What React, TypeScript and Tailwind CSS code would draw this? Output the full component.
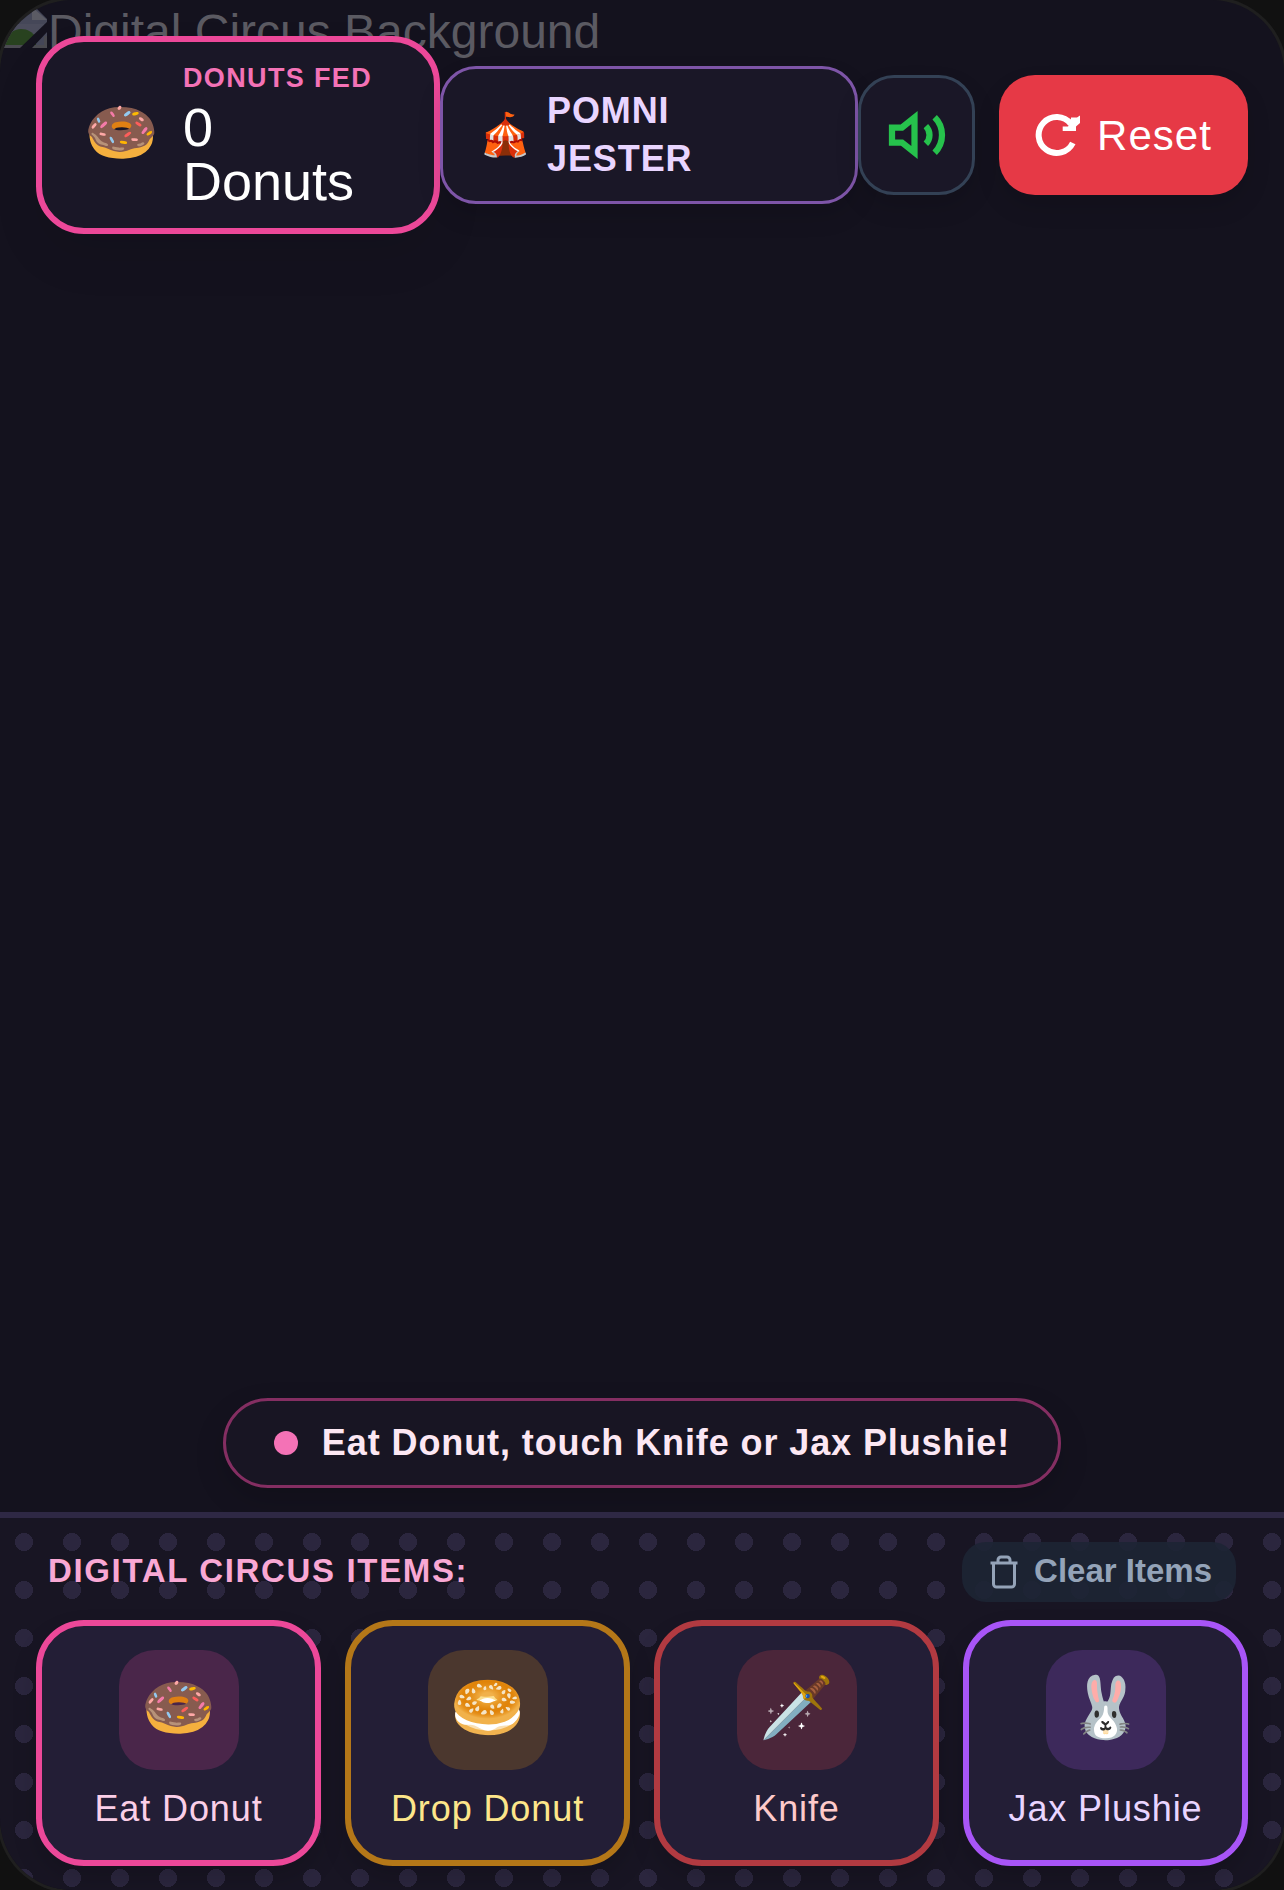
import React, { useState } from 'react';

interface Item {
  id: string;
  label: string;
  emoji: string;
  card: string;
  tile: string;
}

const ITEMS: Item[] = [
  { id:'eat', label:'Eat Donut', emoji:'🍩', card:'border-[#ec4899] text-[#fbcfe8]', tile:'bg-[#4a264a]' },
  { id:'drop', label:'Drop Donut', emoji:'🥯', card:'border-[#b47718] text-[#fde68a]', tile:'bg-[#4b372e]' },
  { id:'knife', label:'Knife', emoji:'🗡️', card:'border-[#b23a41] text-[#fecaca]', tile:'bg-[#4b263a]' },
  { id:'jax', label:'Jax Plushie', emoji:'🐰', card:'border-[#a855f7] text-[#e9d5ff]', tile:'bg-[#3d295b]' },
];

function BrokenImageIcon() {
  return (
    <svg className="size-12 shrink-0" viewBox="0 0 48 48" aria-hidden="true">
      <path d="M0 6h34l13 13v29H0z" fill="#454758" />
      <path d="M4 24h40v10H4z" fill="#4b4c5c" />
      <path d="M3 46c3-11 10-17 18-17 7 0 11 3 15 8v9z" fill="#28421f" />
      <path d="M0 45h47v3H0z" fill="#4a4a50" />
      <path d="M20 48 48 21v10L32 48z" fill="#14121e" />
      <path d="M44 36h3v9h-3z" fill="#4a4a50" />
      <path d="M32 7v13h15z" fill="#5b5b64" />
    </svg>
  );
}

function SpeakerIcon() {
  return (
    <svg className="size-[60px]" viewBox="0 0 24 24" fill="none" stroke="#26c24c" strokeWidth="2.5" aria-hidden="true">
      <path d="M11 5 6 9H2v6h4l5 4z" />
      <path d="M19.07 4.93a10 10 0 0 1 0 14.14M15.54 8.46a5 5 0 0 1 0 7.07" />
    </svg>
  );
}

function ResetIcon() {
  return (
    <svg className="size-[45px]" viewBox="0 0 45 45" aria-hidden="true">
      <path d="M37.8 30A18 18 0 1 1 35.8 10.9" fill="none" stroke="white" strokeWidth="6" />
      <path d="M27.7 13.5H33L36 9V4.500h6l3-2V10l-4 3.500v4.500H27.700z" fill="white" />
    </svg>
  );
}

function TrashIcon() {
  return (
    <svg className="size-9" viewBox="0 0 24 24" fill="none" stroke="currentColor" strokeWidth="2" aria-hidden="true">
      <path d="M3 6h18M19 6v14a2 2 0 0 1-2 2H7a2 2 0 0 1-2-2V6M8 6V4a2 2 0 0 1 2-2h4a2 2 0 0 1 2 2v2" />
    </svg>
  );
}

export default function App() {
  const [donuts, setDonuts] = useState(0);
  const [muted, setMuted] = useState(false);

  return (
    <div className="min-h-screen bg-[#111] font-['Liberation_Sans',Arial,sans-serif]">
      <div className="relative flex min-h-screen flex-col overflow-hidden rounded-[72px] bg-[#14121e] shadow-[0_0_0_3px_#1f1f1f]">
        <div className="absolute left-0 top-0 flex items-start text-[48px] leading-[64px] text-[#5b5a62]">
          <BrokenImageIcon />
          <span>Digital Circus Background</span>
        </div>

        <header className="relative flex items-center justify-between p-9">
          <div className="flex shrink-0 items-center gap-6 rounded-[48px] border-[6px] border-[#ec4899] bg-[#1a1727] py-[18px] pl-[42px] pr-[62px] shadow-[0_24px_48px_rgb(0_0_0/0.08)]">
            <span className="w-[75px] pb-1 text-[60px] leading-[84px]">🍩</span>
            <div>
              <div className="text-[27px] font-bold leading-9 tracking-wider text-[#f472b6]">DONUTS FED</div>
              <div className="w-44 pb-[2px] pt-1 text-[54px] leading-[54px] text-white">{donuts} Donuts</div>
            </div>
          </div>

          <div className="flex min-w-0 flex-1 items-center gap-4 rounded-[36px] border-[3px] border-[#7e55a8] bg-[#1a1727] px-9 py-[18px] shadow-[0_12px_24px_rgb(0_0_0/0.12)]">
            <span className="text-[42px] leading-[60px]">🎪</span>
            <span className="w-40 text-[36px] font-bold leading-[48px] tracking-wide text-[#e9d5ff]">POMNI JESTER</span>
          </div>

          <div className="flex shrink-0 items-center gap-6">
            <button
              className="flex h-[120px] w-[117px] items-center justify-center rounded-[36px] border-[3px] border-[#334155] bg-[#1a1727] shadow-[0_12px_24px_rgb(0_0_0/0.12)]"
              aria-label="Sound"
              aria-pressed={!muted}
              onClick={()=>setMuted(!muted)}
            >
              <SpeakerIcon />
            </button>
            <button
              className="flex h-[120px] items-center gap-[17px] rounded-[36px] bg-[#e63946] px-9 text-[42px] tracking-wide text-white shadow-[0_12px_24px_rgb(0_0_0/0.12)]"
              onClick={()=>setDonuts(0)}
            >
              <ResetIcon />
              Reset
            </button>
          </div>
        </header>

        <main className="relative flex flex-1 items-end justify-center pb-6">
          <div className="flex items-center gap-6 rounded-full border-[3px] border-[#842e62] bg-[#181523] px-12 py-[18px] shadow-[0_12px_30px_rgb(0_0_0/0.15)]">
            <span className="size-6 rounded-full bg-[#f472b6]" />
            <span className="text-[36px] font-bold leading-[48px] tracking-wide text-[#fce7f3]">Eat Donut, touch Knife or Jax Plushie!</span>
          </div>
        </main>

        <footer className="relative border-t-[6px] border-[#2e2844] bg-[#181523] bg-[radial-gradient(#2b263e_9px,transparent_9px)] bg-[size:48px_48px] px-9 pb-6 pt-6">
          <div className="flex items-center justify-between px-3 pb-[18px]">
            <h2 className="pb-[3px] text-[33px] font-bold leading-[48px] tracking-wider text-[#f9a8d4]">DIGITAL CIRCUS ITEMS:</h2>
            <button
              className="flex h-[60px] items-center gap-3 rounded-3xl bg-[#1d2534]/90 px-6 text-[33px] font-bold text-[#94a3b8]"
              onClick={()=>setDonuts(0)}
            >
              <TrashIcon />
              <span className="pb-[3px]">Clear Items</span>
            </button>
          </div>
          <div className="grid grid-cols-4 gap-6">
            {ITEMS.map(item => (
              <button
                key={item.id}
                className={`flex flex-col items-center gap-3 rounded-[48px] border-[6px] bg-[#231e36] px-3 py-6 shadow-[0_12px_24px_rgb(0_0_0/0.15)] ${item.card}`}
                onClick={()=>{ if (item.id==='eat') setDonuts(donuts+1); }}
              >
                <span className={`flex size-[120px] items-center justify-center rounded-[36px] pb-1 text-[60px] leading-[90px] ${item.tile}`}>{item.emoji}</span>
                <span className="text-[36px] leading-[54px] tracking-wide">{item.label}</span>
              </button>
            ))}
          </div>
        </footer>
      </div>
    </div>
  );
}
